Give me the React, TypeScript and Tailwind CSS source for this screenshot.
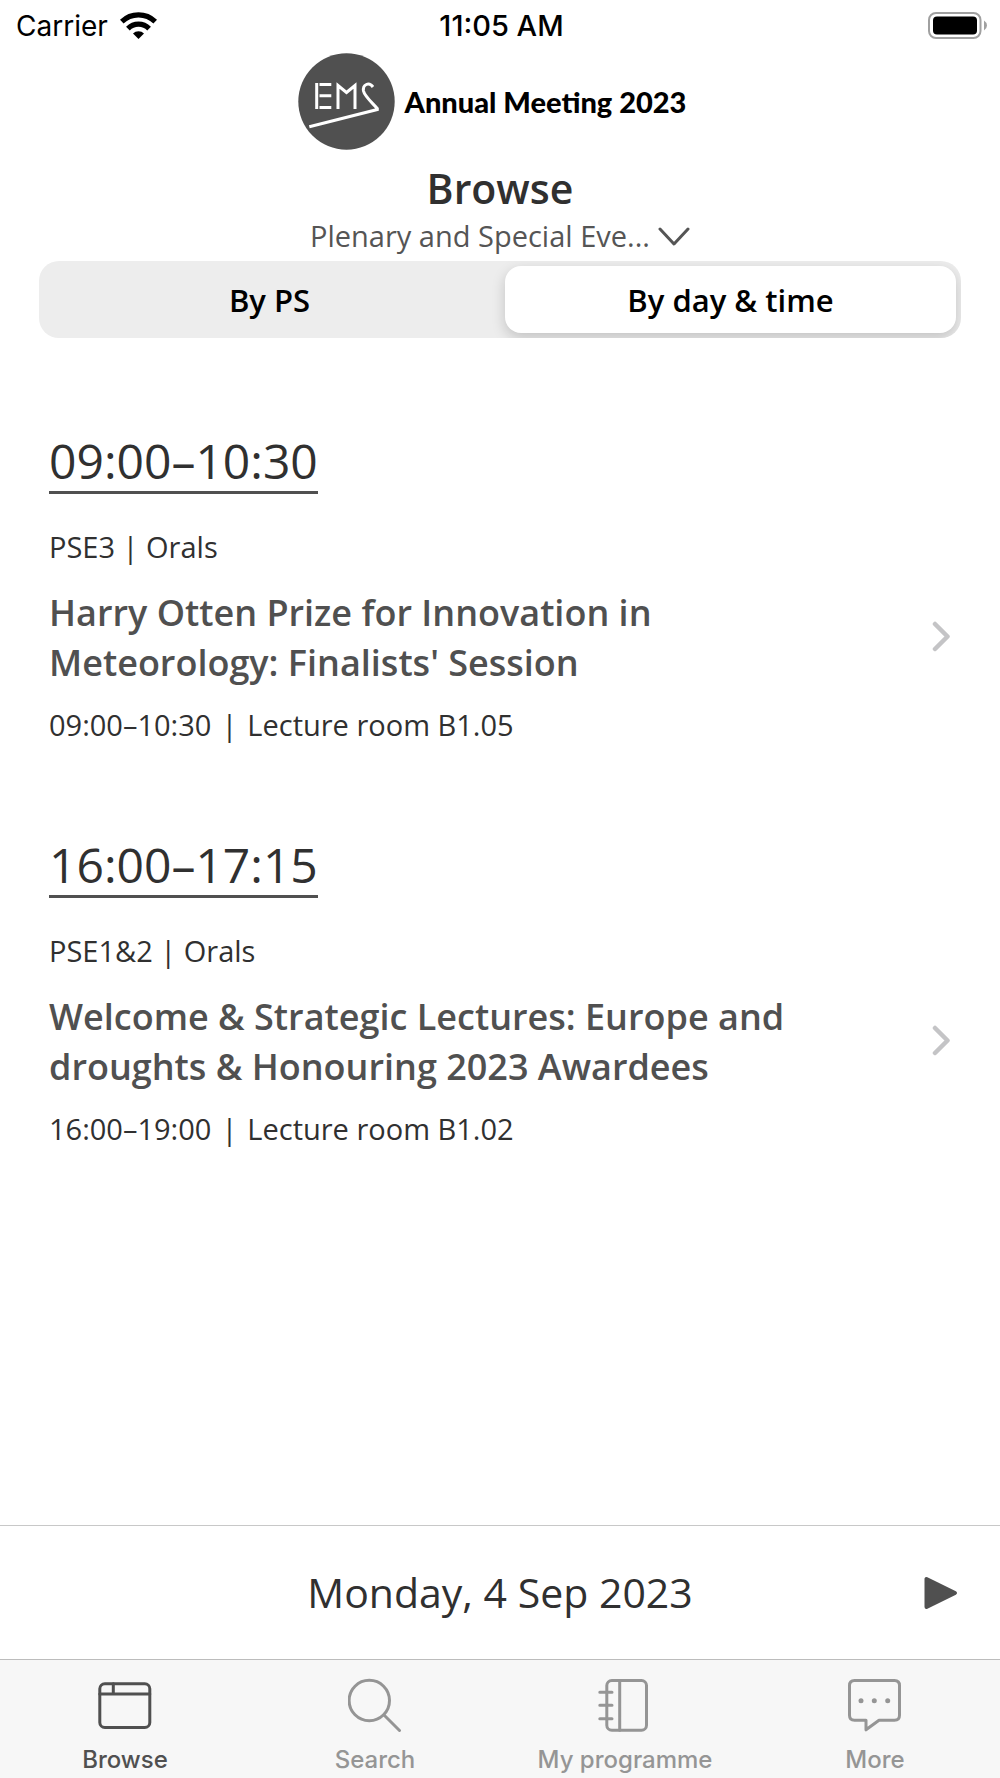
import React, { useState } from "react";

type View = "ps" | "time";

const sessions = [
  {
    slot: "09:00–10:30",
    code: "PSE3 | Orals",
    title: "Harry Otten Prize for Innovation in Meteorology: Finalists' Session",
    time: "09:00–10:30",
    room: "Lecture room B1.05",
  },
  {
    slot: "16:00–17:15",
    code: "PSE1&2 | Orals",
    title: "Welcome & Strategic Lectures: Europe and droughts & Honouring 2023 Awardees",
    time: "16:00–19:00",
    room: "Lecture room B1.02",
  },
];

const views: { id: View; label: string }[] = [
  { id: "ps", label: "By PS" },
  { id: "time", label: "By day & time" },
];

const navItems = [
  {
    label: "Browse",
    icon: (
      <>
        <rect x="1.8" y="5.8" width="50" height="43.7" rx="5" />
        <path d="M1.8 16H51.8M15.3 5.8V16" />
      </>
    ),
  },
  {
    label: "Search",
    icon: (
      <>
        <circle cx="21.3" cy="22.5" r="20.2" />
        <path d="M36 37L51.5 52.5" />
      </>
    ),
  },
  {
    label: "My programme",
    icon: (
      <>
        <rect x="8.8" y="2.5" width="39.7" height="49.7" rx="5" />
        <path d="M21.7 2.5V52.2M1.8 14.3H14M1.8 27.3H14M1.8 40.7H14" />
      </>
    ),
  },
  {
    label: "More",
    icon: (
      <>
        <path d="M6.5 2.5H46.5Q51.5 2.5 51.5 7.5V37.2Q51.5 42.2 46.5 42.2H31L18 51.8V42.2H6.5Q1.5 42.2 1.5 37.2V7.5Q1.5 2.5 6.5 2.5Z" />
        <g fill="currentColor" stroke="none">
          <circle cx="13" cy="22.7" r="2.5" />
          <circle cx="26.3" cy="22.7" r="2.5" />
          <circle cx="39.7" cy="22.7" r="2.5" />
        </g>
      </>
    ),
  },
];

function StatusBar() {
  return (
    <div className="grid h-[51px] grid-cols-3 items-center pr-[13px] pl-4 font-[Inter,sans-serif] text-[28px] text-black">
      <div className="flex items-center gap-3">
        <span>Carrier</span>
        <svg width="37" height="28" viewBox="0 0 37 28" fill="none" stroke="currentColor" strokeWidth="5.2" aria-hidden="true">
          <path d="M1.8 9.7A24 24 0 0 1 35.2 9.7" />
          <path d="M7.9 16.6A15 15 0 0 1 29.1 16.6" />
          <path d="M18.5 27L13 21.6A7.7 7.7 0 0 1 24 21.6Z" fill="currentColor" stroke="none" />
        </svg>
      </div>
      <span className="text-center text-[29px] font-medium">11:05 AM</span>
      <svg className="justify-self-end" width="59" height="28" viewBox="0 0 59 28" aria-hidden="true">
        <rect x="1" y="1" width="51.5" height="25" rx="7" fill="none" stroke="#a0a0a0" strokeWidth="2" />
        <rect x="5" y="4.5" width="44" height="18" rx="4" />
        <path d="M56 8.5Q59 10.500 59 13.500T56 18.500Z" fill="#a0a0a0" />
      </svg>
    </div>
  );
}

function Logo() {
  return (
    <svg width="97" height="97" viewBox="0 0 97 97" fill="none" stroke="#fff" strokeWidth="3" role="img" aria-label="EMS">
      <circle cx="48.5" cy="48.5" r="48.2" fill="#505050" stroke="none" />
      <path d="M18.7 30V56M21.5 31.5H33.3M21.5 42.7H33.3M21.5 54.5H33.3" />
      <path d="M40 56V32.5L48.5 39.5L57 32.5V56" />
      <path d="M75 34C71 28.5 64.5 31.5 65.5 38C66.500 43 73 48.500 79.300 55.500V56.500L11.300 73.700" />
    </svg>
  );
}

export default function App() {
  const [view, setView] = useState<View>("time");
  const [tab, setTab] = useState("Browse");

  return (
    <div className="flex min-h-screen flex-col bg-white font-['Open_Sans',sans-serif] text-[#303030]">
      <StatusBar />

      <header className="flex flex-col items-center px-[39px] pt-0.5">
        <div className="flex items-center gap-2.5 pr-4">
          <Logo />
          <span className="font-[Lato,sans-serif] text-[29px] leading-9 font-black text-black">Annual Meeting 2023</span>
        </div>

        <h1 className="mt-3 text-[41px] leading-[52px] font-semibold">Browse</h1>

        <div className="relative mt-0.5 text-[#555555]">
          <select
            aria-label="Programme group"
            className="h-10 appearance-none bg-transparent pr-10 text-[29px] leading-10"
          >
            <option>Plenary and Special Eve...</option>
          </select>
          <svg
            className="pointer-events-none absolute top-[11px] right-0"
            width="32"
            height="20"
            viewBox="0 0 32 20"
            fill="none"
            stroke="currentColor"
            strokeWidth="3"
            strokeLinecap="round"
            strokeLinejoin="round"
            aria-hidden="true"
          >
            <path d="M2 2L16 17L30 2" />
          </svg>
        </div>

        <div role="tablist" className="mt-[5px] flex w-full gap-2.5 overflow-hidden rounded-[20px] bg-[#ededed] p-[5px]">
          {views.map((v) => (
            <button
              key={v.id}
              type="button"
              role="tab"
              aria-selected={view === v.id}
              onClick={() => setView(v.id)}
              className={`h-[67px] flex-1 rounded-2xl pt-0.5 text-[31px] font-semibold text-black ${
                view === v.id ? "bg-white shadow-[0_5px_14px_rgba(0,0,0,0.18)]" : ""
              }`}
            >
              {v.label}
            </button>
          ))}
        </div>
      </header>

      <main className="flex flex-1 flex-col gap-[90px] px-[49px] pt-[93px] pb-12">
        {sessions.map((s) => (
          <section key={s.slot} className="flex flex-col items-start">
            <h2 className="border-b-3 border-[#505050] text-5xl leading-[60px]">{s.slot}</h2>
            <a href="#session" className="mt-[33px] flex w-full items-center gap-16">
              <div className="flex flex-1 flex-col text-[29px] leading-10">
                <p>{s.code}</p>
                <h3 className="mt-[21px] text-4xl leading-[50px] font-semibold text-[#505050]">{s.title}</h3>
                <p className="mt-[17px] flex gap-2.5">
                  <span>{s.time}</span>
                  <span>|</span>
                  <span>{s.room}</span>
                </p>
              </div>
              <svg
                className="shrink-0"
                width="20"
                height="32"
                viewBox="0 0 20 32"
                fill="none"
                stroke="#c4c4c6"
                strokeWidth="4.5"
                strokeLinecap="round"
                strokeLinejoin="round"
                aria-hidden="true"
              >
                <path d="M4 4L16.500 16.500L4 29" />
              </svg>
            </a>
          </section>
        ))}
      </main>

      <div className="grid h-[134px] grid-cols-[1fr_auto_1fr] items-center border-t border-[#c8c8c8] px-[42px]">
        <span className="col-start-2 text-[41px]">Monday, 4 Sep 2023</span>
        <button type="button" aria-label="Next day" className="justify-self-end">
          <svg width="34" height="34" viewBox="0 0 34 34" fill="#505050" stroke="#505050" strokeWidth="4" strokeLinejoin="round" aria-hidden="true">
            <path d="M2.500 3V31L31 17Z" />
          </svg>
        </button>
      </div>

      <nav className="grid h-[119px] grid-cols-4 border-t border-[#bcbcbc] bg-[#f7f7f7] font-[Inter,sans-serif]">
        {navItems.map((item) => (
          <a
            key={item.label}
            href="#tab"
            onClick={() => setTab(item.label)}
            aria-current={tab === item.label ? "page" : undefined}
            className={`flex flex-col items-center gap-3.5 pt-[18px] ${
              tab === item.label ? "text-[#505050]" : "text-[#959595]"
            }`}
          >
            <svg
              width="54"
              height="54"
              viewBox="0 0 54 54"
              fill="none"
              stroke="currentColor"
              strokeWidth="3"
              strokeLinecap="round"
              strokeLinejoin="round"
              aria-hidden="true"
            >
              {item.icon}
            </svg>
            <span className="text-2xl leading-7 font-medium">{item.label}</span>
          </a>
        ))}
      </nav>
    </div>
  );
}
